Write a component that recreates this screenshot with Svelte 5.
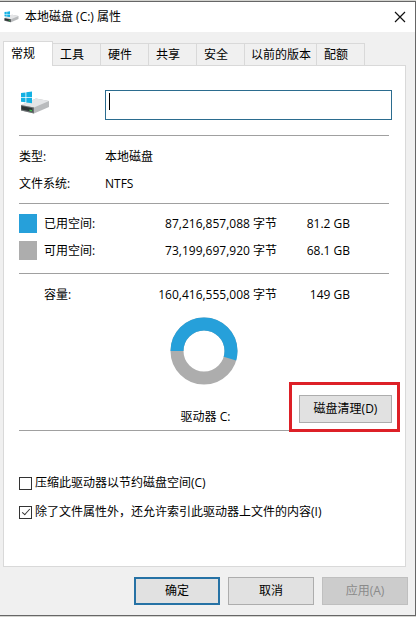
<script lang="ts">
  const tabs = ["常规", "工具", "硬件", "共享", "安全", "以前的版本", "配额"];
  const usage = [
    { kind: "used", label: "已用空间:", bytes: "87,216,857,088 字节", size: "81.2 GB" },
    { kind: "free", label: "可用空间:", bytes: "73,199,697,920 字节", size: "68.1 GB" },
  ];
  const total = 160416555008;
  const used = 87216857088;

  // ring circumference for r = 27
  const ring = 2 * Math.PI * 27;
  const usedArc = (used / total) * ring;

  let active = $state("常规");
  let label = $state("");
  let compress = $state(false);
  let index = $state(true);
</script>

{#snippet drive()}
  <svg class="drive" viewBox="0 0 30 24" aria-hidden="true">
    <path d="M1 14 L16 7.500 L29 10 L29 16 L14 22.500 L1 19.500 Z" fill="#b9bbbd" />
    <path d="M1 14 L16 7.500 L29 10 L14 16.500 Z" fill="#e4e5e7" />
    <path d="M1 14 L14 16.500 L14 22.500 L1 19.500 Z" fill="#6b7072" />
    <path d="M1.500 15 L12.500 17.200 L12.500 20.800 L1.500 18.500 Z" fill="#2c3334" />
    <path d="M9.500 18.500 L12 19 L12 20.500 L9.500 20 Z" fill="#3fc04c" />
    <path d="M1 2 L5.500 1.400 V6 H1 Z M6.300 1.300 L12 0.500 V6 H6.300 Z M1 6.800 H5.500 V11.300 L1 10.700 Z M6.300 6.800 H12 V12.200 L6.300 11.400 Z" fill="#13b1e3" />
  </svg>
{/snippet}

<div class="window">
  <header class="titlebar">
    <span class="title-icon">{@render drive()}</span>
    <h1>本地磁盘 (C:) 属性</h1>
    <button class="close" type="button" aria-label="关闭">
      <svg viewBox="0 0 12 12" aria-hidden="true">
        <path d="M1 1 L11 11 M11 1 L1 11" stroke="#111" stroke-width="1.2" />
      </svg>
    </button>
  </header>

  <div class="tabs" role="tablist">
    {#each tabs as tab}
      <button
        type="button"
        role="tab"
        class:active={active === tab}
        class:wide={tab.length > 2}
        aria-selected={active === tab}
        onclick={() => (active = tab)}>{tab}</button
      >
    {/each}
  </div>

  <main class="panel">
    <div class="name-row">
      <span class="name-icon">{@render drive()}</span>
      <div class="field">
        <input type="text" aria-label="卷标" bind:value={label} />
        <span class="caret"></span>
      </div>
    </div>
    <hr />

    <dl class="info">
      <dt>类型:</dt>
      <dd>本地磁盘</dd>
      <dt>文件系统:</dt>
      <dd>NTFS</dd>
    </dl>
    <hr />

    <table>
      <tbody class="usage">
        {#each usage as row}
          <tr>
            <td class="key"><span class="swatch {row.kind}"></span></td>
            <th scope="row">{row.label}</th>
            <td class="bytes">{row.bytes}</td>
            <td class="size">{row.size}</td>
            <td></td>
          </tr>
        {/each}
      </tbody>
    </table>
    <hr />

    <table class="capacity">
      <tbody>
        <tr>
          <td class="key"></td>
          <th scope="row">容量:</th>
          <td class="bytes">160,416,555,008 字节</td>
          <td class="size">149 GB</td>
          <td></td>
        </tr>
      </tbody>
    </table>

    <svg class="chart" viewBox="0 0 68 68" role="img" aria-label="空间使用情况">
      <circle cx="34" cy="34" r="27" class="ring-free" />
      <circle
        cx="34"
        cy="34"
        r="27"
        class="ring-used"
        stroke-dasharray="{usedArc} {ring}"
        transform="rotate(180 34 34)"
      />
    </svg>

    <div class="drive-row">
      <span class="drive-name">驱动器 C:</span>
      <div class="cleanup">
        <button class="btn" type="button">磁盘清理(D)</button>
      </div>
    </div>
    <hr />

    <div class="options">
      <label>
        <input type="checkbox" bind:checked={compress} />
        压缩此驱动器以节约磁盘空间(C)
      </label>
      <label>
        <input type="checkbox" bind:checked={index} />
        除了文件属性外，还允许索引此驱动器上文件的内容(I)
      </label>
    </div>
  </main>

  <footer>
    <button class="btn primary" type="button">确定</button>
    <button class="btn" type="button">取消</button>
    <button class="btn" type="button" disabled>应用(A)</button>
  </footer>
</div>

<style>
  :global(body) {
    padding: 1px 0;
    background: #d3d3cf;
  }
  .window {
    box-sizing: border-box;
    background: #f0f0f0;
    border: 1px solid #666;
    border-left: 0;
    color: #000;
    font: 12px/16px "Open Sans", "Noto Sans CJK SC", sans-serif;
  }
  button,
  input {
    font: inherit;
    color: inherit;
    box-sizing: border-box;
  }
  .drive {
    display: block;
    width: 100%;
  }

  .titlebar {
    display: flex;
    align-items: center;
    height: 30px;
    padding: 0 9px 0 4px;
    background: #fff;
  }
  .title-icon {
    width: 15px;
    margin-right: 6px;
  }
  h1 {
    flex: 1;
    margin: 0;
    font: inherit;
  }
  .close {
    width: 12px;
    height: 12px;
    padding: 0;
    border: 0;
    background: none;
  }
  .close svg {
    display: block;
  }

  .tabs {
    display: flex;
    align-items: flex-end;
    height: 24px;
    padding: 9px 0 0 3px;
  }
  .tabs button {
    width: 48px;
    height: 22px;
    padding: 0 0 0 7px;
    border: 1px solid #d9d9d9;
    border-width: 1px 1px 0 0;
    background: #f0f0f0;
    text-align: left;
    white-space: nowrap;
  }
  .tabs button.wide {
    width: 72px;
    padding-left: 6px;
  }
  .tabs button.active {
    z-index: 1;
    width: 50px;
    height: 25px;
    margin-bottom: -1px;
    padding: 0 0 1px 7px;
    border-left-width: 1px;
    background: #fff;
  }

  .panel {
    margin: 0 9px 0 3px;
    padding: 24px 16px 46px 15px;
    border: 1px solid #d9d9d9;
    background: #fff;
  }
  hr {
    height: 1px;
    margin: 0;
    border: 0;
    background: #a0a0a0;
  }

  .name-row {
    display: flex;
    align-items: center;
    margin-bottom: 15px;
    margin-right: -3px;
  }
  .name-icon {
    width: 30px;
    margin: 0 55px 4px 1px;
  }
  .field {
    position: relative;
    flex: 1;
  }
  .field input {
    display: block;
    width: 100%;
    height: 30px;
    padding: 0 4px;
    border: 1px solid #2b6c8f;
    background: #fff;
    outline: 0;
  }
  .caret {
    position: absolute;
    top: 3px;
    left: 4px;
    width: 1px;
    height: 17px;
    background: #000;
  }
  .field:has(input:focus) .caret {
    display: none;
  }

  .info {
    display: grid;
    grid-template-columns: 86px 1fr;
    margin: 0;
    padding: 7px 0 6px;
    line-height: 27px;
  }
  dd {
    margin: 0;
  }

  table {
    width: 100%;
    margin: 6px 0 9px;
    border-collapse: collapse;
    table-layout: fixed;
    line-height: 27px;
  }
  .capacity {
    margin: 7px 0 9px;
  }
  td,
  th {
    height: 27px;
    padding: 0;
    font-weight: normal;
    text-align: left;
    white-space: nowrap;
  }
  .key {
    width: 25px;
  }
  th {
    width: 95px;
  }
  .bytes {
    width: 138px;
    text-align: right;
  }
  .size {
    width: 73px;
    text-align: right;
  }
  .swatch {
    display: block;
    width: 18px;
    height: 19px;
  }
  .used {
    background: #26a0da;
  }
  .free {
    background: #adadad;
  }

  .chart {
    display: block;
    width: 68px;
    margin: 0 auto;
  }
  .chart circle {
    fill: none;
    stroke-width: 13;
  }
  .ring-free {
    stroke: #adadad;
  }
  .ring-used {
    stroke: #26a0da;
  }

  .drive-row {
    display: grid;
    grid-template-columns: 1fr auto 1fr;
    align-items: start;
    margin: 10px -3px 5px 0;
  }
  .drive-name {
    grid-column: 2;
    padding-top: 14px;
  }
  .cleanup {
    position: relative;
    justify-self: end;
    width: 93px;
  }
  .cleanup::after {
    content: "";
    position: absolute;
    inset: -13px -8px -9px -10px;
    border: 3px solid #dd2027;
    pointer-events: none;
  }

  .btn {
    width: 86px;
    height: 28px;
    padding: 0;
    border: 1px solid #adadad;
    background: #e1e1e1;
  }
  .cleanup .btn {
    display: block;
    width: 100%;
  }
  .btn.primary {
    border: 2px solid #2672a5;
  }
  .btn:disabled {
    border-color: #bfbfbf;
    background: #ccc;
    color: #8a8a8a;
  }

  .options {
    display: grid;
    gap: 13px;
    padding-top: 44px;
  }
  .options label {
    display: flex;
    align-items: center;
    gap: 3px;
    white-space: nowrap;
  }
  .options input {
    appearance: none;
    position: relative;
    width: 13px;
    height: 13px;
    margin: 0;
    border: 1px solid #333;
    background: #fff;
  }
  .options input:checked::after {
    content: "";
    position: absolute;
    top: 0;
    left: 4px;
    width: 3px;
    height: 7px;
    border: solid #333;
    border-width: 0 1px 1px 0;
    transform: rotate(42deg);
  }

  footer {
    display: flex;
    justify-content: flex-end;
    gap: 8px;
    padding: 10px 7px 10px 0;
  }
</style>
